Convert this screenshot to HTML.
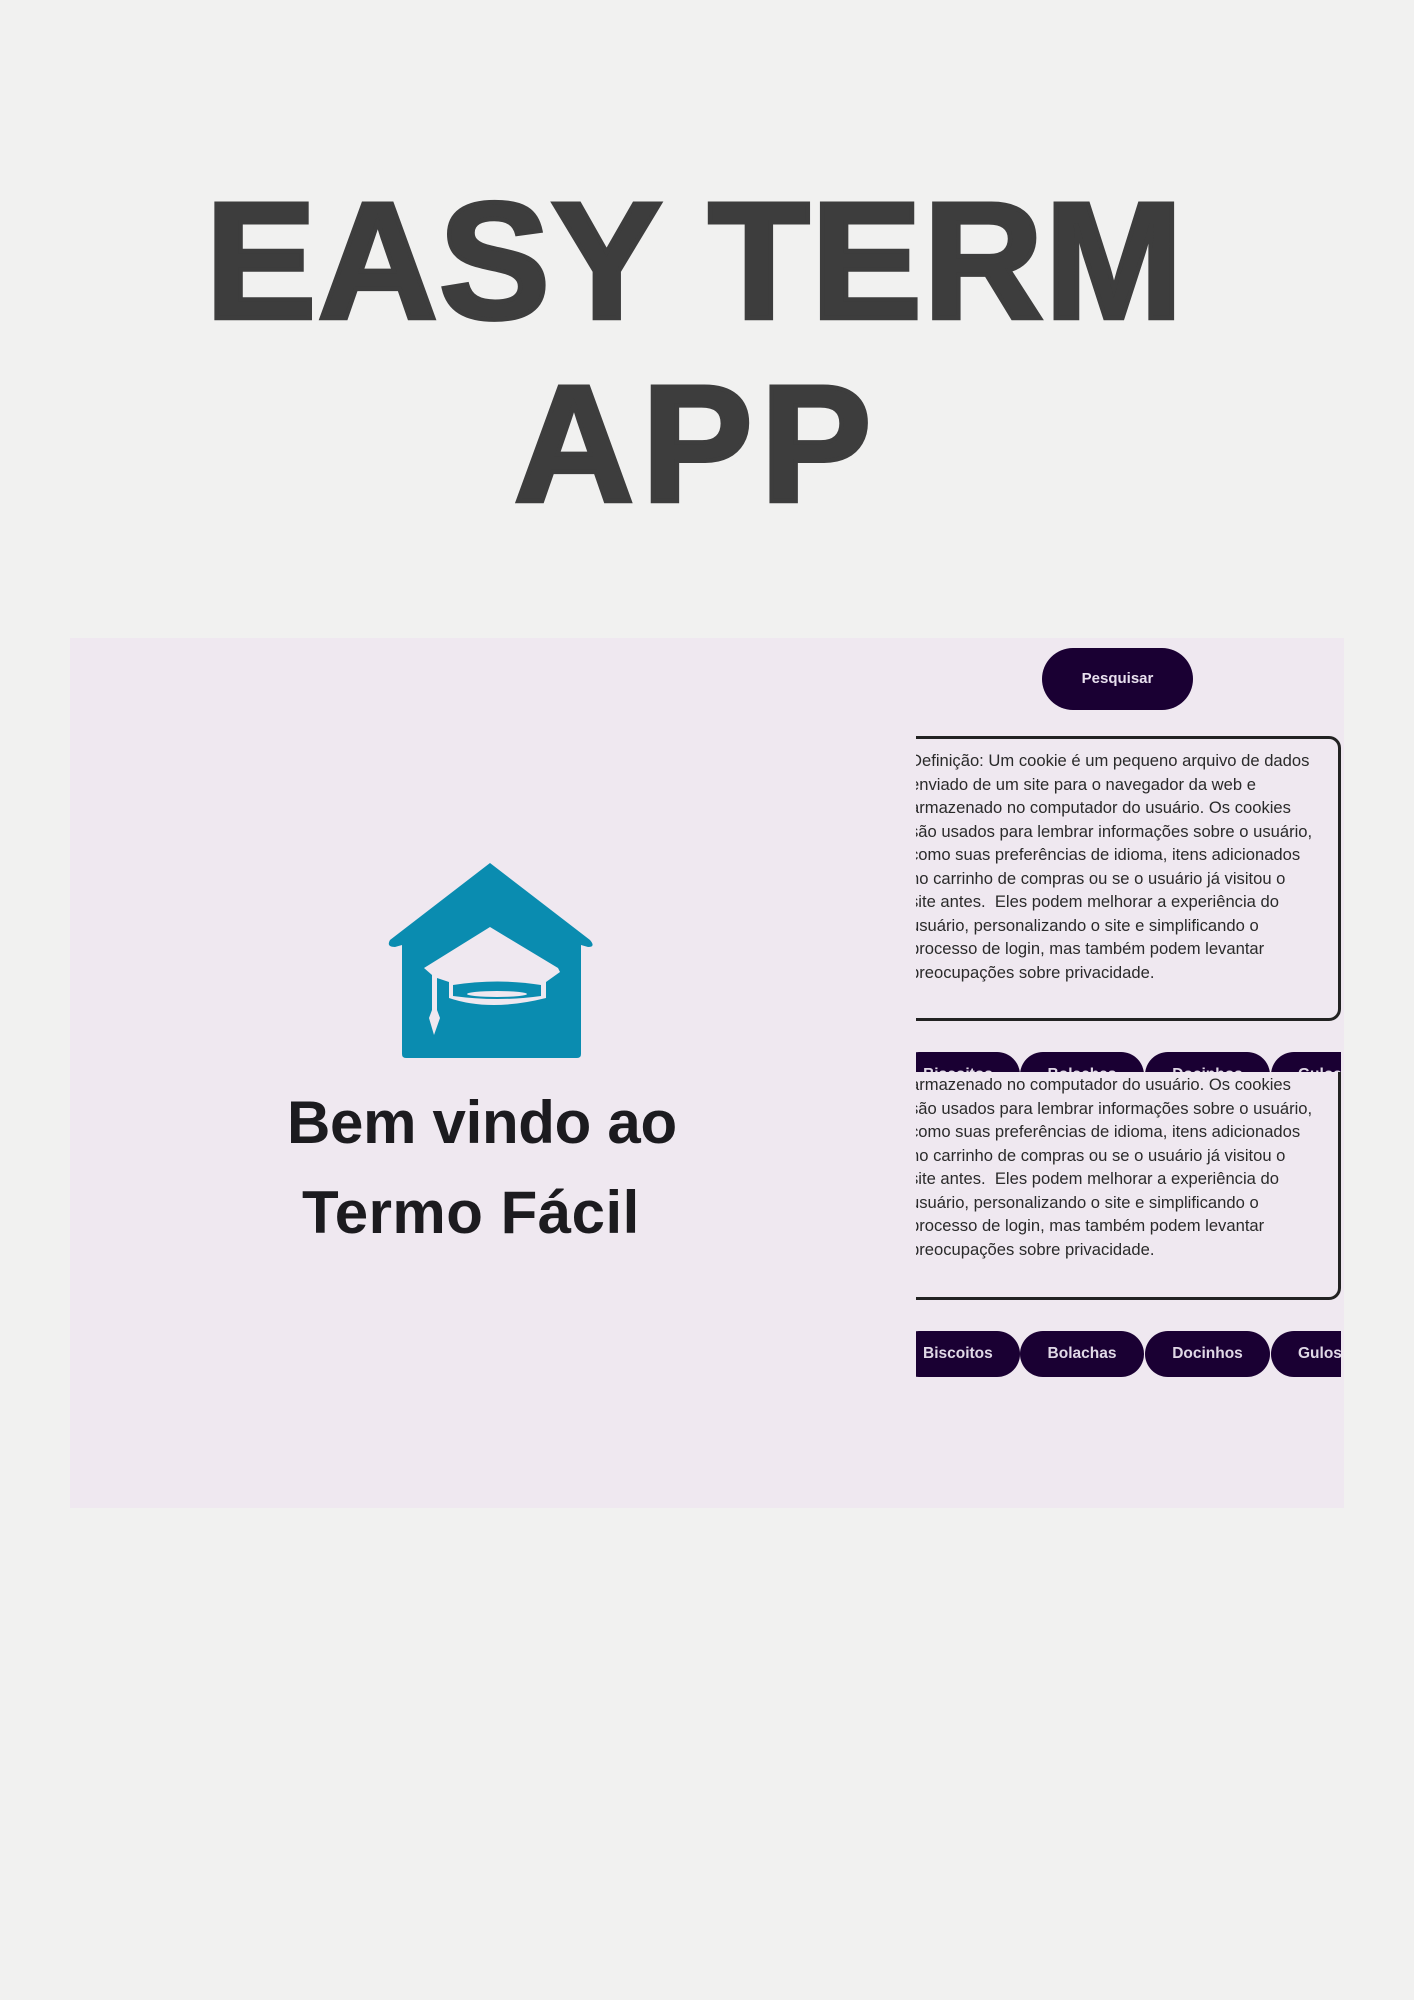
<!DOCTYPE html>
<html><head><meta charset="utf-8"><style>
*{margin:0;padding:0;box-sizing:border-box}
body{width:1414px;height:2000px;background:#f1f1f0;position:relative;overflow:hidden;font-family:"Liberation Sans",sans-serif}
.t{position:absolute;left:0;width:1414px;font-weight:900;color:#3d3d3d;font-size:166px;letter-spacing:1.5px;line-height:1;-webkit-text-stroke:4.5px #3d3d3d}
.panel{position:absolute;left:70px;top:638px;width:1274px;height:870px;background:#efe8f0}
.w{position:absolute;font-weight:bold;color:#1c1b1f;font-size:60px;letter-spacing:-0.3px}
.btn{position:absolute;background:#1a0033;color:#e8e0ee;font-weight:bold;font-size:15px;border-radius:32px;text-align:center}
.col{position:absolute;left:916px;width:425px;overflow:hidden}
.box{position:absolute;left:-20px;right:0;border:3px solid #222;border-radius:12px;}
.txt{position:absolute;left:-6px;font-size:16.6px;line-height:23.5px;color:#2a2a2a;white-space:nowrap}
.chip{position:absolute;top:0;height:46px;background:#1a0033;color:#e0d8e6;font-weight:bold;font-size:15.5px;border-radius:23px;line-height:46px;text-align:center}
</style></head><body>
<div class="t" style="top:179px;text-align:center;padding-right:24px">EASY TERM</div>
<div class="t" style="top:362px;left:514px;width:auto;letter-spacing:8px">APP</div>
<div class="panel"></div>
<svg style="position:absolute;left:0;top:0" width="1414" height="2000">
<path d="M490 863 L390 940 Q386 947 395 947 L402 945 L402 1054 Q402 1058 406 1058 L577 1058 Q581 1058 581 1054 L581 945 L588 947 Q596 947 590 940 Z" fill="#0a8cb0"/>
<path d="M490 927 L424 968 L432 975 L432 1010 L429 1018 L434 1035 L440 1018 L437 1010 L437 978 L449 982 L449 998 Q490 1012 546 998 L546 982 L560 972 L558 968 Z" fill="#efe8f0"/>
<path d="M453 985 Q498 978 541 985 L541 996 Q498 1002 453 996 Z" fill="#0a8cb0"/>
<ellipse cx="497" cy="994" rx="30" ry="3" fill="#efe8f0"/>
</svg>
<div class="w" style="left:287px;top:1088px">Bem vindo ao</div>
<div class="w" style="left:302px;top:1178px;letter-spacing:0.5px">Termo Fácil</div>
<div class="btn" style="left:1042px;top:648px;width:151px;height:62px;line-height:62px">Pesquisar</div>
<div class="col" style="top:730px;height:300px">
<div class="box" style="top:6px;height:285px"></div>
<div class="txt" style="top:19px">Definição: Um cookie é um pequeno arquivo de dados<br>enviado de um site para o navegador da web e<br>armazenado no computador do usuário. Os cookies<br>são usados para lembrar informações sobre o usuário,<br>como suas preferências de idioma, itens adicionados<br>no carrinho de compras ou se o usuário já visitou o<br>site antes.&nbsp; Eles podem melhorar a experiência do<br>usuário, personalizando o site e simplificando o<br>processo de login, mas também podem levantar<br>preocupações sobre privacidade.</div>
</div>
<div class="col" style="top:1052px;height:20px">
<div class="chip" style="left:-20px;width:124px">Biscoitos</div>
<div class="chip" style="left:104px;width:124px">Bolachas</div>
<div class="chip" style="left:229px;width:125px">Docinhos</div>
<div class="chip" style="left:355px;width:110px;text-align:left;padding-left:27px">Gulos</div>
</div>
<div class="col" style="top:1072px;height:232px">
<div class="box" style="top:-20px;height:248px"></div>
<div class="txt" style="top:1px">armazenado no computador do usuário. Os cookies<br>são usados para lembrar informações sobre o usuário,<br>como suas preferências de idioma, itens adicionados<br>no carrinho de compras ou se o usuário já visitou o<br>site antes.&nbsp; Eles podem melhorar a experiência do<br>usuário, personalizando o site e simplificando o<br>processo de login, mas também podem levantar<br>preocupações sobre privacidade.</div>
</div>
<div class="col" style="top:1331px;height:46px">
<div class="chip" style="left:-20px;width:124px;text-align:left;padding-left:27px">Biscoitos</div>
<div class="chip" style="left:104px;width:124px">Bolachas</div>
<div class="chip" style="left:229px;width:125px">Docinhos</div>
<div class="chip" style="left:355px;width:110px;text-align:left;padding-left:27px">Gulos</div>
</div>
</body></html>
